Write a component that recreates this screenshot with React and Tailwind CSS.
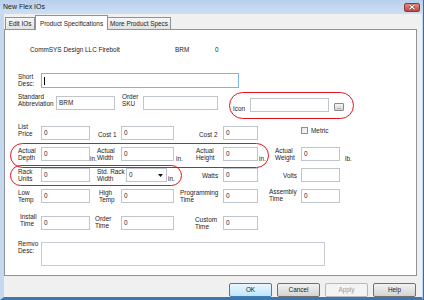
import React from 'react'

function Field({ className = '', children }) {
  return (
    <div className={'h-[14px] shrink-0 bg-white border border-[#c0c5cc] pl-[2px] flex items-center ' + className}>
      {children}
    </div>
  )
}

function Lbl({ className = '', children }) {
  return <div className={'shrink-0 leading-[7px] whitespace-nowrap ' + className}>{children}</div>
}

function Btn({ children, className = '' }) {
  return (
    <button className={'w-[43px] h-[14px] rounded-[2px] border flex items-center justify-center leading-none ' + className}>
      {children}
    </button>
  )
}

export default function App() {
  return (
    <div className="w-[424px] h-[300px] flex flex-col bg-[#f0f0f0] text-[6.4px] text-[#1c1c1c] font-['Liberation_Sans',Arial,sans-serif] border-r border-[#3a6da5] overflow-hidden">
      {/* title bar */}
      <div className="h-[14px] shrink-0 flex items-center justify-between bg-gradient-to-b from-[#b9d0ec] to-[#cddff3] pl-[3px] pr-[3px]">
        <span className="text-[7px] text-[#1a1a1a]">New Flex IOs</span>
        <div className="w-[16px] h-[9px] rounded-[2px] bg-gradient-to-b from-[#e08b80] to-[#c4473b] border border-[#8a3a33] flex items-center justify-center">
          <svg width="8" height="6" viewBox="0 0 8 6">
            <path d="M1.5 0.8 L6.5 5.2 M6.5 0.8 L1.5 5.2" stroke="#6b2a24" strokeWidth="2.2" />
            <path d="M1.5 0.8 L6.5 5.2 M6.5 0.8 L1.5 5.2" stroke="#fff" strokeWidth="1.2" />
          </svg>
        </div>
      </div>

      {/* body */}
      <div className="flex-1 flex flex-col border-l-[4px] border-l-[#c4d8ef] border-r-[1px] border-r-[#c4d8ef] border-b-[3px] border-b-[#3f76b0]">
        {/* tabs */}
        <div className="h-[15px] shrink-0 flex items-end pl-[1px]">
          <div className="w-[30px] h-[12px] border border-b-0 border-[#8e929b] bg-gradient-to-b from-[#f6f6f6] to-[#e2e2e2] flex items-center justify-center">
            Edit IOs
          </div>
          <div className="w-[73px] h-[15px] -mb-[1px] relative z-10 border border-b-0 border-[#8e929b] bg-white flex items-start justify-center pt-[3px]">
            Product Specifications
          </div>
          <div className="w-[63px] h-[12px] border border-b-0 border-l-0 border-[#8e929b] bg-gradient-to-b from-[#f6f6f6] to-[#e2e2e2] flex items-center justify-center">
            More Product Specs
          </div>
        </div>

        {/* panel */}
        <div className="w-[413px] h-[247px] shrink-0 bg-white border border-[#8e929b] relative flex flex-col">
          {/* row: header */}
          <div className="mt-[16px] h-[8px] flex items-center pl-[25px]">
            <span className="w-[145px] shrink-0">CommSYS Design LLC Firebolt</span>
            <span className="w-[40px] shrink-0">BRM</span>
            <span>0</span>
          </div>

          {/* short desc */}
          <div className="mt-[18px] h-[16px] flex items-start pl-[13px]">
            <Lbl className="w-[23px] mt-[1px]">Short<br />Desc:</Lbl>
            <div className="w-[198px] h-[15px] mt-[1px] border border-[#7eb4ea] bg-white flex items-center pl-[2px]">
              <span className="w-px h-[8px] bg-black" />
            </div>
          </div>

          {/* abbreviation / sku / icon */}
          <div className="mt-[5px] h-[19px] flex items-start pl-[13px]">
            <Lbl className="w-[38px]">Standard<br />Abbreviation</Lbl>
            <Field className="w-[59px] mt-[3px]">BRM</Field>
            <Lbl className="w-[21px] ml-[7px]">Order<br />SKU</Lbl>
            <Field className="w-[75px] mt-[3px]" />
            <Lbl className="w-[17px] ml-[15px] mt-[12px]">Icon</Lbl>
            <Field className="w-[79px] mt-[5px]" />
            <div className="w-[10px] h-[8px] ml-[5px] mt-[10px] border border-[#8a8a8a] rounded-[1px] bg-gradient-to-b from-[#f4f4f4] to-[#d6d6d6] flex items-end justify-center text-[5px] leading-[5px]">
              ...
            </div>
          </div>

          {/* list price / cost */}
          <div className="mt-[10px] h-[18px] flex items-start pl-[13px]">
            <Lbl className="w-[23px] mt-[1px]">List<br />Price</Lbl>
            <Field className="w-[49px] mt-[4px]">0</Field>
            <Lbl className="w-[23px] ml-[8px] mt-[9px]">Cost 1</Lbl>
            <Field className="w-[53px] mt-[4px]">0</Field>
            <Lbl className="w-[24px] ml-[25px] mt-[9px]">Cost 2</Lbl>
            <Field className="w-[35px] mt-[4px]">0</Field>
            <div className="w-[7px] h-[7px] ml-[43px] mt-[5px] border border-[#8f8f8f] bg-gradient-to-br from-[#e6e6e6] to-[#fafafa] shrink-0" />
            <Lbl className="ml-[3px] mt-[5px]">Metric</Lbl>
          </div>

          {/* actual dims */}
          <div className="mt-[6px] h-[16px] flex items-start pl-[13px]">
            <Lbl className="w-[23px] mt-[1px]">Actual<br />Depth</Lbl>
            <Field className="w-[49px] mt-[1px]">0</Field>
            <Lbl className="w-[7px] mt-[9px]">in.</Lbl>
            <Lbl className="w-[24px] mt-[1px]">Actual<br />Width</Lbl>
            <Field className="w-[53px] mt-[1px]">0</Field>
            <Lbl className="w-[9px] ml-[2px] mt-[9px]">in.</Lbl>
            <Lbl className="w-[27px] ml-[11px] mt-[1px]">Actual<br />Height</Lbl>
            <Field className="w-[35px] mt-[1px]">0</Field>
            <Lbl className="w-[16px] ml-[1px] mt-[9px]">in.</Lbl>
            <Lbl className="w-[26px] mt-[1px]">Actual<br />Weight</Lbl>
            <Field className="w-[39px] mt-[1px]">0</Field>
            <Lbl className="ml-[5px] mt-[9px]">lb.</Lbl>
          </div>

          {/* rack */}
          <div className="mt-[5px] h-[16px] flex items-start pl-[13px]">
            <Lbl className="w-[23px] mt-[1px]">Rack<br />Units</Lbl>
            <Field className="w-[49px] mt-[1px]">0</Field>
            <Lbl className="w-[29px] ml-[7px] mt-[1px]">Std. Rack<br />Width</Lbl>
            <Field className="w-[41px] mt-[1px] justify-between pr-[3px]">
              <span>0</span>
              <svg width="5" height="3" viewBox="0 0 5 3"><path d="M0 0 H5 L2.5 3 Z" fill="#111" /></svg>
            </Field>
            <Lbl className="w-[7px] ml-[1px] mt-[8px]">in.</Lbl>
            <Lbl className="w-[21px] ml-[27px] mt-[5px]">Watts</Lbl>
            <Field className="w-[35px] mt-[1px]">0</Field>
            <Lbl className="w-[18px] ml-[25px] mt-[5px]">Volts</Lbl>
            <Field className="w-[39px] mt-[1px]" />
          </div>

          {/* temps */}
          <div className="mt-[5px] h-[16px] flex items-start pl-[13px]">
            <Lbl className="w-[23px] mt-[1px]">Low<br />Temp</Lbl>
            <Field className="w-[49px] mt-[1px]">0</Field>
            <Lbl className="w-[22px] ml-[9px] mt-[1px]">High<br />Temp</Lbl>
            <Field className="w-[53px] mt-[1px]">0</Field>
            <Lbl className="w-[43px] ml-[6px] mt-[1px]">Programming<br />Time</Lbl>
            <Field className="w-[35px] mt-[1px]">0</Field>
            <Lbl className="w-[32px] ml-[11px]">Assembly<br />Time</Lbl>
            <Field className="w-[39px] mt-[1px]">0</Field>
          </div>

          {/* times */}
          <div className="mt-[9px] h-[17px] flex items-start pl-[13px]">
            <Lbl className="w-[21px] ml-[2px]">Install<br />Time</Lbl>
            <Field className="w-[49px] mt-[3px]">0</Field>
            <Lbl className="w-[26px] ml-[5px] mt-[2px]">Order<br />Time</Lbl>
            <Field className="w-[53px] mt-[3px]">0</Field>
            <Lbl className="w-[28px] ml-[21px] mt-[3px]">Custom<br />Time</Lbl>
            <Field className="w-[35px] mt-[3px]">0</Field>
          </div>

          {/* remvo */}
          <div className="mt-[10px] h-[27px] flex items-start pl-[13px]">
            <Lbl className="w-[23px]">Remvo<br />Desc:</Lbl>
            <div className="w-[284px] h-[24px] mt-[2px] bg-white border border-[#c8ccd2]" />
          </div>

          {/* highlight ovals */}
          <div className="absolute left-[224px] top-[62px] w-[125px] h-[27px] rounded-[14px] border-[1.5px] border-[#e0141e]" />
          <div className="absolute left-[5px] top-[113px] w-[259px] h-[25px] rounded-[13px] border-[1.5px] border-[#e0141e]" />
          <div className="absolute left-[5px] top-[135px] w-[172px] h-[21px] rounded-[11px] border-[1.5px] border-[#e0141e]" />
        </div>

        {/* buttons */}
        <div className="mt-[7px] flex gap-[5px] pl-[225px]">
          <Btn className="border-[#3c7fb1] bg-gradient-to-b from-[#eaf6fd] to-[#bee6fd]">OK</Btn>
          <Btn className="border-[#707070] bg-gradient-to-b from-[#f2f2f2] to-[#d4d4d4]">Cancel</Btn>
          <Btn className="border-[#b5b9bd] bg-[#f4f4f4] text-[#9a9a9a]">Apply</Btn>
          <Btn className="border-[#707070] bg-gradient-to-b from-[#f2f2f2] to-[#d4d4d4]">Help</Btn>
        </div>
      </div>
    </div>
  )
}
